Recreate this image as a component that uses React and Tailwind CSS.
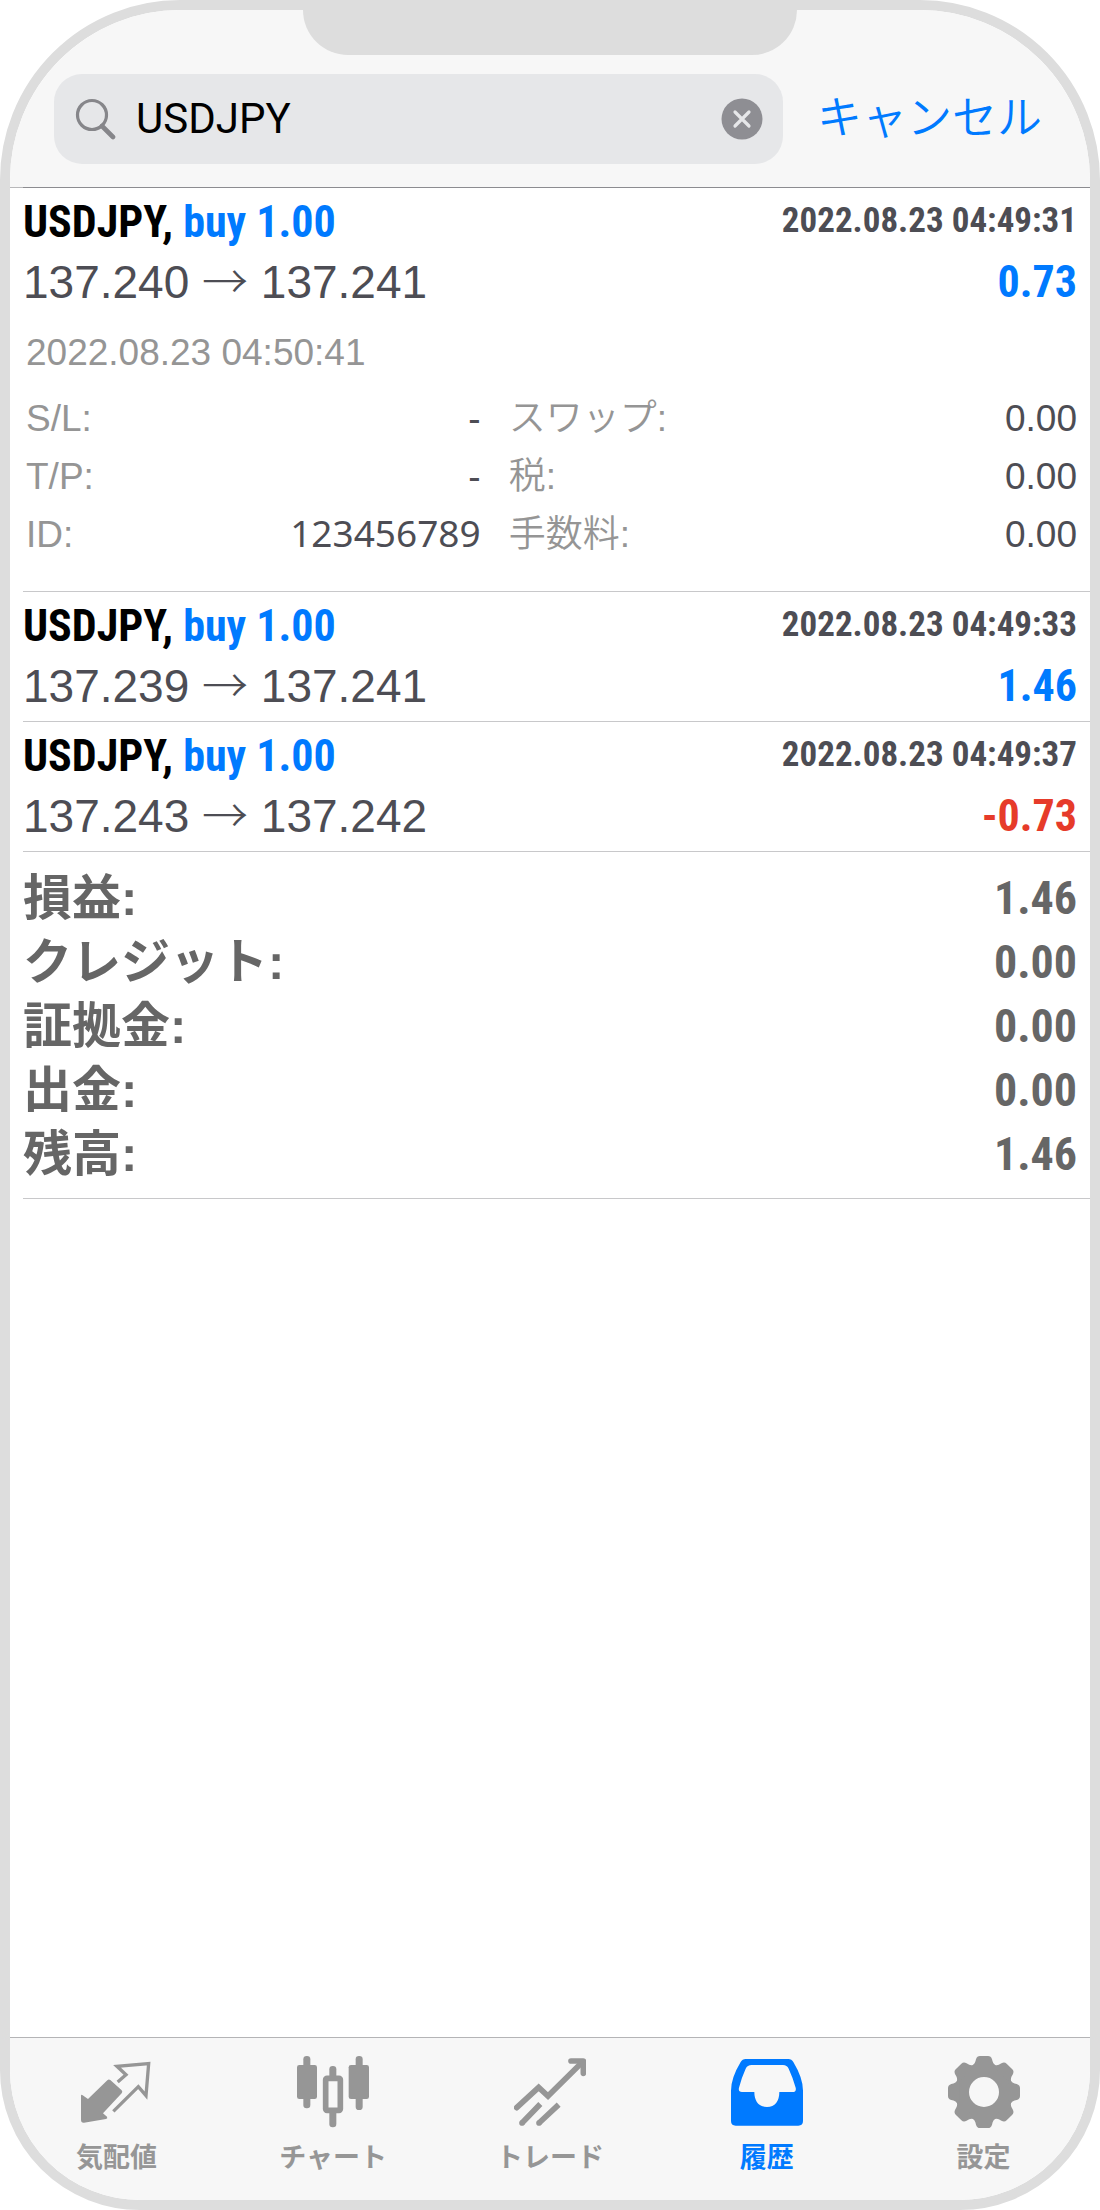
import { useState } from "react";

const deals = [
  {
    symbol: "USDJPY",
    side: "buy 1.00",
    time: "2022.08.23 04:49:31",
    open: "137.240",
    close: "137.241",
    profit: "0.73",
    details: {
      closeTime: "2022.08.23 04:50:41",
      rows: [
        ["S/L:", "-", "スワップ:", "0.00"],
        ["T/P:", "-", "税:", "0.00"],
        ["ID:", "123456789", "手数料:", "0.00"],
      ],
    },
  },
  {
    symbol: "USDJPY",
    side: "buy 1.00",
    time: "2022.08.23 04:49:33",
    open: "137.239",
    close: "137.241",
    profit: "1.46",
  },
  {
    symbol: "USDJPY",
    side: "buy 1.00",
    time: "2022.08.23 04:49:37",
    open: "137.243",
    close: "137.242",
    profit: "-0.73",
  },
];

const totals = [
  ["損益:", "1.46"],
  ["クレジット:", "0.00"],
  ["証拠金:", "0.00"],
  ["出金:", "0.00"],
  ["残高:", "1.46"],
];

function QuotesIcon() {
  return (
    <svg viewBox="0 0 216 216" className="size-[72px]" aria-hidden="true">
      <path
        fill="currentColor"
        d="M3 120 Q3 114 8 118 L24 129 L82 73 Q86 68 91 72 L125 103 Q129 107 125 112 L69 172 L81 182 Q84 187 78 189 L12 200 Q3 201 3 191 Z"
      />
      <path
        d="M113 78 L138 56 L111 31 L206 23 L198 119 L175 92 L100 166"
        fill="none"
        stroke="currentColor"
        strokeWidth="10"
      />
    </svg>
  );
}

function ChartIcon() {
  return (
    <svg viewBox="0 0 216 216" className="size-[72px]" fill="currentColor" aria-hidden="true">
      <rect x="19" y="0" width="21" height="157" rx="10" />
      <rect x="0" y="27" width="60" height="102" rx="7" />
      <rect x="176" y="0" width="21" height="162" rx="10" />
      <rect x="155" y="27" width="61" height="102" rx="7" />
      <rect x="97" y="30" width="21" height="40" rx="10" />
      <rect x="97" y="158" width="21" height="56" rx="10" />
      <rect x="86" y="67" width="44" height="96" rx="4" fill="none" stroke="currentColor" strokeWidth="17" />
    </svg>
  );
}

function TradeIcon() {
  return (
    <svg viewBox="0 0 216 216" className="size-[72px]" fill="none" stroke="currentColor" strokeWidth="17" aria-hidden="true">
      <path strokeLinecap="round" d="M8 155 L74 94 L102 120 L203 20" />
      <path strokeLinecap="round" strokeLinejoin="round" d="M171 15 H208 V52" />
      <path d="M24 201 L79 144 M75 201 L134 146" />
      <g fill="currentColor" stroke="none">
        <circle cx="24" cy="201" r="8.500" />
        <circle cx="75" cy="201" r="8.500" />
      </g>
    </svg>
  );
}

function HistoryIcon() {
  return (
    <svg viewBox="0 0 216 216" className="size-[72px]" aria-hidden="true">
      <path
        fill="currentColor"
        fillRule="evenodd"
        d="M44 9 H172 Q182 9 187 18 Q216 66 216 104 V195 Q216 209 202 209 H14 Q0 209 0 195 V104 Q0 66 29 18 Q34 9 44 9 Z M62 27 Q49 27 44 38 Q32 64 24 95 Q21 108 33 108 H70 C70 136 84 153 108 153 C132 153 145 136 145 108 H184 Q197 108 194 95 Q186 66 173 38 Q168 27 156 27 Z"
      />
    </svg>
  );
}

function SettingsIcon() {
  return (
    <svg viewBox="0 0 216 216" className="size-[72px]" fill="currentColor" aria-hidden="true">
      <g transform="translate(108 108)">
        <circle r="65" fill="none" stroke="currentColor" strokeWidth="40" />
        {[0, 45, 90, 135, 180, 225, 270, 315].map((angle) => (
          <path
            key={angle}
            transform={`rotate(${angle})`}
            d="M-35 -74 L-33 -82 Q-27 -84 -24 -98 Q-21 -108 -12 -108 H12 Q21 -108 24 -98 Q27 -84 33 -82 L35 -74 Z"
          />
        ))}
      </g>
    </svg>
  );
}

const tabs = [
  { label: "気配値", Icon: QuotesIcon },
  { label: "チャート", Icon: ChartIcon },
  { label: "トレード", Icon: TradeIcon },
  { label: "履歴", Icon: HistoryIcon, active: true },
  { label: "設定", Icon: SettingsIcon },
];

function SearchBar() {
  const [query, setQuery] = useState("USDJPY");
  return (
    <form role="search" className="flex items-center gap-[34px] pt-16 pr-12 pb-[23px] pl-11" onSubmit={(e) => e.preventDefault()}>
      <div className="flex h-[90px] min-w-0 flex-1 items-center rounded-[28px] bg-[#e6e7e9] px-5">
        <svg viewBox="0 0 42 42" className="size-[42px] shrink-0 text-[#86868a]" fill="none" stroke="currentColor" aria-hidden="true">
          <circle cx="18" cy="17" r="14.500" strokeWidth="3.200" />
          <path d="M28 28 L39 39" strokeWidth="4.600" strokeLinecap="round" />
        </svg>
        <input
          type="text"
          aria-label="検索"
          value={query}
          onChange={(e) => setQuery(e.target.value)}
          className="ml-5 min-w-0 flex-1 bg-transparent font-['Roboto','Noto_Sans_CJK_JP',sans-serif] text-[42px] leading-[60px] text-black outline-none"
        />
        <button type="button" aria-label="クリア" onClick={() => setQuery("")} className="shrink-0">
          <svg viewBox="0 0 42 42" className="size-[42px]" aria-hidden="true">
            <circle cx="21" cy="21" r="20.500" fill="#8e8e93" />
            <path d="M14 14 L28 28 M28 14 L14 28" stroke="#e6e7e9" strokeWidth="3.200" strokeLinecap="round" />
          </svg>
        </button>
      </div>
      <button type="button" className="shrink-0 text-[45px] leading-[60px] font-[350] text-[#007aff]">
        キャンセル
      </button>
    </form>
  );
}

function Deal({ deal }) {
  const { details } = deal;
  return (
    <li className="border-b border-[#c8c8ca] pt-1 pr-[13px]">
      <div className="flex items-start justify-between font-['Roboto_Condensed',sans-serif] font-bold">
        <h2 className="text-[44px] leading-[60px] text-black">
          {deal.symbol}, <span className="text-[#007aff]">{deal.side}</span>
        </h2>
        <time className="text-[35px] leading-[58px] text-[#4d4d54]">{deal.time}</time>
      </div>
      <div className="flex items-start justify-between leading-[60px]">
        <p className="text-[46px] text-[#4d4d54]">
          {deal.open} <span className="font-['Noto_Sans_CJK_JP',sans-serif] leading-none font-light">→</span> {deal.close}
        </p>
        <p
          className={
            deal.profit.startsWith("-")
              ? "font-['Roboto_Condensed',sans-serif] text-[44px] font-bold text-[#e63b2a]"
              : "font-['Roboto_Condensed',sans-serif] text-[44px] font-bold text-[#007aff]"
          }
        >
          {deal.profit}
        </p>
      </div>
      {details ? (
        <div className="mt-3 pb-[27px] pl-[3px] text-[37px] leading-[58px] text-[#959595]">
          <time className="block">{details.closeTime}</time>
          <dl className="mt-2 grid grid-cols-[4fr_5fr] gap-x-7">
            {details.rows.flatMap(([leftLabel, leftValue, rightLabel, rightValue]) => [
              <div key={leftLabel} className="flex items-baseline justify-between">
                <dt>{leftLabel}</dt>
                <dd className={/\d/.test(leftValue) ? "font-['Noto_Sans',sans-serif] leading-none text-[#4d4d54]" : "text-[#4d4d54]"}>
                  {leftValue}
                </dd>
              </div>,
              <div key={rightLabel} className="flex items-baseline justify-between">
                <dt className="font-[350]">{rightLabel}</dt>
                <dd className="text-[#4d4d54]">{rightValue}</dd>
              </div>,
            ])}
          </dl>
        </div>
      ) : (
        <div className="h-[5px]" />
      )}
    </li>
  );
}

export default function App() {
  return (
    <div className="bg-white font-['Liberation_Sans','Noto_Sans_CJK_JP',sans-serif]" lang="ja">
      <div className="relative flex min-h-screen flex-col overflow-hidden rounded-t-[180px] rounded-b-[140px] border-[10px] border-[#dddddd] bg-white">
        <div className="absolute top-0 left-1/2 h-[45px] w-[494px] -translate-x-1/2 rounded-b-[45px] bg-[#dddddd]" />
        <header className="bg-[#f7f7f7]">
          <SearchBar />
          <div className="h-px bg-[#b8b8ba] pl-[13px]">
            <div className="h-px bg-[#8c8c90]" />
          </div>
        </header>

        <main className="flex-1 pl-[13px]">
          <ul>
            {deals.map((deal) => (
              <Deal key={deal.time} deal={deal} />
            ))}
          </ul>
          <dl className="border-b border-[#c8c8ca] pt-3.5 pr-[13px] pb-3 leading-[64px] font-bold text-[#666666]">
            {totals.map(([label, value]) => (
              <div key={label} className="flex items-start justify-between">
                <dt className="text-[49px]">{label}</dt>
                <dd className="font-['Roboto_Condensed',sans-serif] text-[46px]">{value}</dd>
              </div>
            ))}
          </dl>
        </main>

        <nav className="-mx-0.5 grid grid-cols-5 border-t border-[#b4b4b6] bg-[#f7f7f7] pt-[18px] pb-6">
          {tabs.map(({ label, Icon, active }) => (
            <a
              key={label}
              href="#"
              aria-current={active ? "page" : undefined}
              className={
                active
                  ? "flex flex-col items-center gap-3 text-[#007aff]"
                  : "flex flex-col items-center gap-3 text-[#969696]"
              }
            >
              <Icon />
              <span className="text-[27px] leading-9 font-bold">{label}</span>
            </a>
          ))}
        </nav>
      </div>
    </div>
  );
}
